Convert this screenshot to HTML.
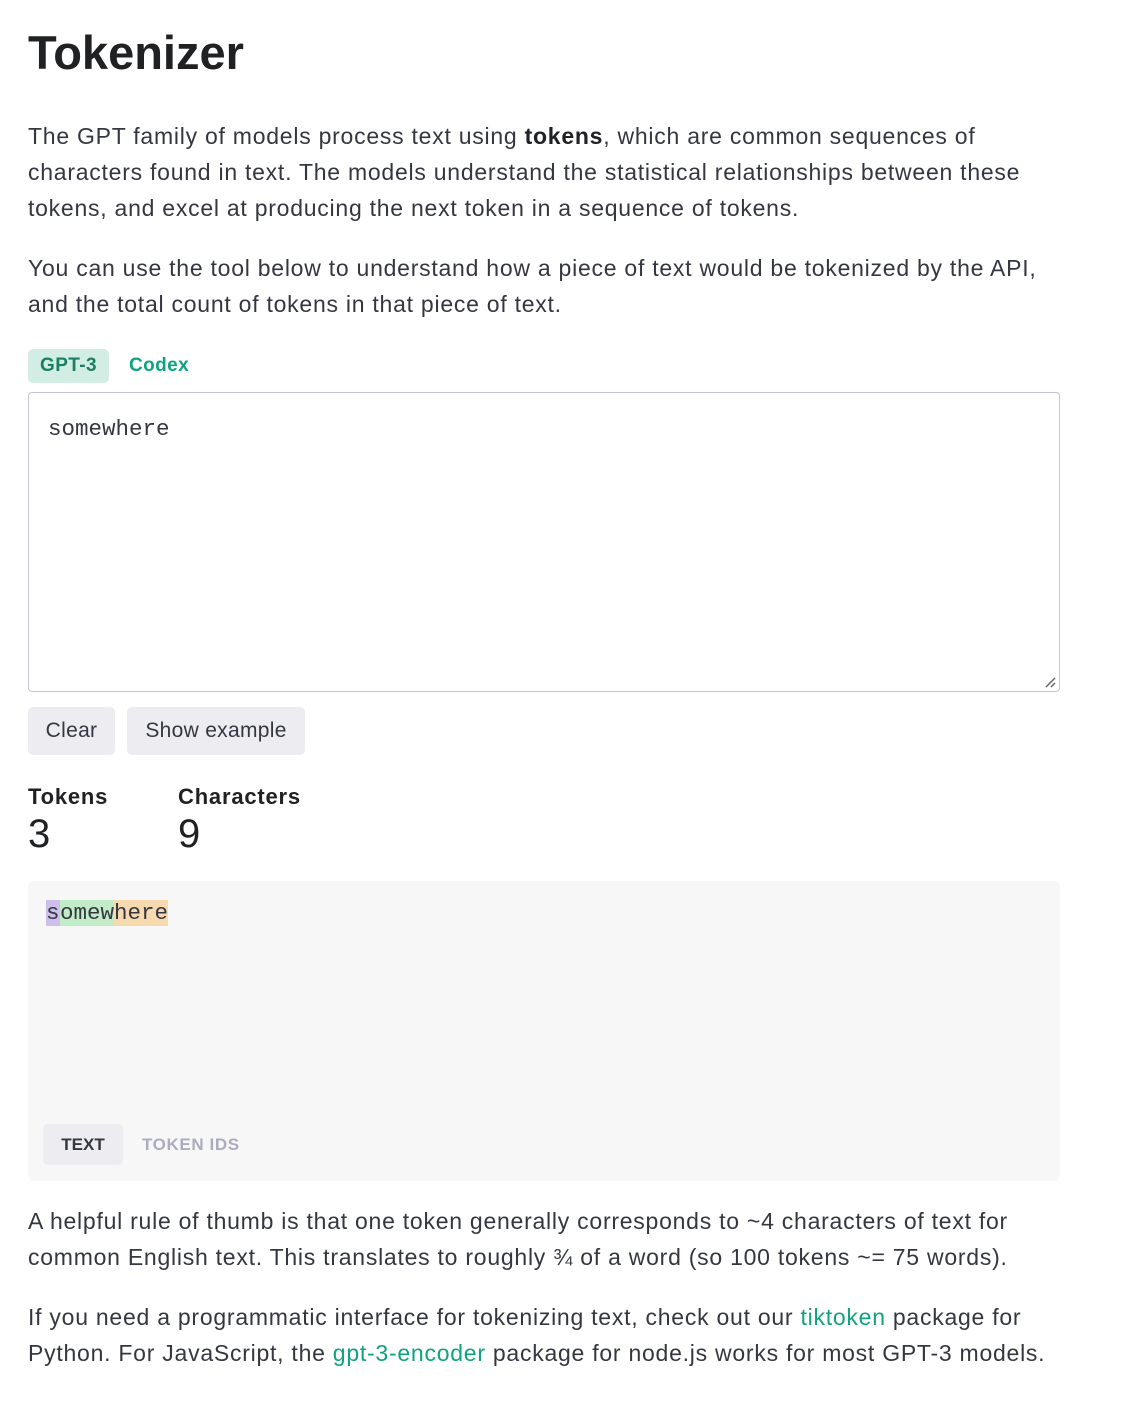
<!DOCTYPE html>
<html><head><meta charset="utf-8"><style>
body{margin:0;background:#fff;width:1130px;height:1416px;position:relative;font-family:"Liberation Sans",sans-serif;color:#353740;overflow:hidden}
.a{position:absolute;white-space:nowrap}
.p{font-size:23px;left:28px;letter-spacing:0.75px}
h1{position:absolute;left:28px;top:25px;margin:0;font-size:47px;font-weight:bold;color:#202123}
.g{color:#10a37f}
.box{position:absolute;left:28px;top:392px;width:1030px;height:298px;border:1px solid #c5c5d2;border-radius:4px}
.mono{font-family:"Liberation Mono",monospace;font-size:22.5px}
.btn{position:absolute;top:707px;height:48px;background:#ececf1;border-radius:5px;font-size:21px;letter-spacing:0.3px;line-height:48px;text-align:center;color:#353740}
.out{position:absolute;left:28px;top:881px;width:1032px;height:300px;background:#f7f7f8;border-radius:6px}
</style></head><body>
<h1>Tokenizer</h1>
<div class="a p" style="top:123px">The GPT family of models process text using <b style="color:#202123">tokens</b>, which are common sequences of</div>
<div class="a p" style="top:159px">characters found in text. The models understand the statistical relationships between these</div>
<div class="a p" style="top:195px">tokens, and excel at producing the next token in a sequence of tokens.</div>
<div class="a p" style="top:255px">You can use the tool below to understand how a piece of text would be tokenized by the API,</div>
<div class="a p" style="top:291px">and the total count of tokens in that piece of text.</div>
<div class="a" style="left:28px;top:349px;width:81px;height:34px;background:#d2ede4;border-radius:5px;color:#1a7f64;font-weight:bold;font-size:19px;letter-spacing:0.4px;line-height:34px;text-align:center">GPT-3</div>
<div class="a g" style="left:129px;top:349px;font-weight:bold;font-size:19px;letter-spacing:0.4px;line-height:34px">Codex</div>
<div class="box"><div class="a mono" style="left:19px;top:23px">somewhere</div>
<svg class="a" style="right:2px;bottom:2px" width="14" height="14"><path d="M3 12L12 3M8 12L12 8" stroke="#666" stroke-width="1.5"/></svg></div>
<div class="btn" style="left:28px;width:87px">Clear</div>
<div class="btn" style="left:127px;width:178px">Show example</div>
<div class="a" style="left:28px;top:784px;font-size:22px;letter-spacing:0.8px;font-weight:bold;color:#202123">Tokens</div>
<div class="a" style="left:178px;top:784px;font-size:22px;letter-spacing:0.8px;font-weight:bold;color:#202123">Characters</div>
<div class="a" style="left:28px;top:812px;font-size:40px;color:#202123">3</div>
<div class="a" style="left:178px;top:812px;font-size:40px;color:#202123">9</div>
<div class="out">
<div class="a mono" style="left:18px;top:19px;height:26px;line-height:26px"><span style="background:#cdbeeb;display:inline-block;width:14px">s</span><span style="background:#c2ecc8">omew</span><span style="background:#f6d9ae">here</span></div>
<div class="a" style="left:15px;top:243px;width:80px;height:41px;background:#ececf1;border-radius:5px;font-weight:bold;font-size:17px;line-height:41px;text-align:center;color:#353740">TEXT</div>
<div class="a" style="left:114px;top:243px;font-weight:bold;font-size:17px;letter-spacing:0.6px;line-height:41px;color:#acacbe">TOKEN IDS</div>
</div>
<div class="a p" style="top:1208px">A helpful rule of thumb is that one token generally corresponds to ~4 characters of text for</div>
<div class="a p" style="top:1244px">common English text. This translates to roughly ¾ of a word (so 100 tokens ~= 75 words).</div>
<div class="a p" style="top:1304px">If you need a programmatic interface for tokenizing text, check out our <span class="g">tiktoken</span> package for</div>
<div class="a p" style="top:1340px">Python. For JavaScript, the <span class="g">gpt-3-encoder</span> package for node.js works for most GPT-3 models.</div>
</body></html>
